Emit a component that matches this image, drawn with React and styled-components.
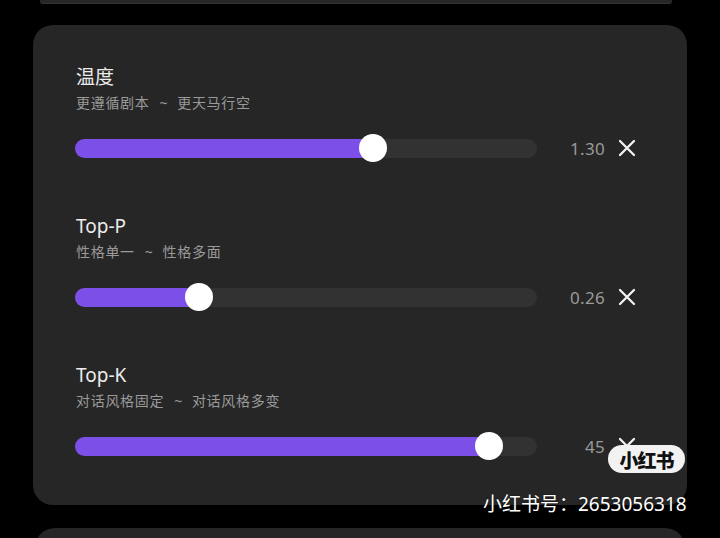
import styled, { createGlobalStyle } from "styled-components";

const GlobalStyle = createGlobalStyle`
  html, body {
    margin: 0;
    padding: 0;
    background: #000;
    overflow: hidden;
  }
  body {
    font-family: "Noto Sans", "Noto Sans CJK SC", sans-serif;
  }
`;

const Page = styled.div`
  position: relative;
  width: 720px;
  height: 538px;
  overflow: hidden;
  background: #000;
  display: flex;
  flex-direction: column;
  align-items: center;
`;

const PrevCard = styled.div`
  flex-shrink: 0;
  width: 632px;
  height: 3px;
  margin-left: -8px;
  background: #262626;
  border-radius: 0 0 14px 14px;
  box-shadow: 0 1px 0 #333;
`;

const Card = styled.div`
  flex-shrink: 0;
  width: 654px;
  height: 480px;
  box-sizing: border-box;
  margin-top: 22px;
  padding: 39px 51px 0 42px;
  background: #262626;
  border-radius: 20px;
  display: flex;
  flex-direction: column;
  gap: 50px;
`;

const NextCard = styled.div`
  flex-shrink: 0;
  width: 650px;
  height: 120px;
  margin-top: 23px;
  background: #262626;
  border-radius: 20px;
`;

const Section = styled.div`
  display: flex;
  flex-direction: column;
`;

const Title = styled.div`
  color: #ececec;
  font-size: 19px;
  line-height: 26px;
  padding-left: 1px;
`;

const Hint = styled.div`
  margin-top: 3px;
  color: #9a9a9a;
  font-size: 14px;
  line-height: 20px;
  letter-spacing: 0.7px;
  padding-left: 1px;
  white-space: nowrap;
`;

const Tilde = styled.span`
  margin: 0 9px 0 10px;
`;

const Row = styled.div`
  margin-top: 20px;
  height: 30px;
  display: flex;
  align-items: center;
`;

const Track = styled.div`
  position: relative;
  flex: 0 0 462px;
  height: 19px;
  border-radius: 10px;
  background: #323232;
`;

const Fill = styled.div`
  height: 100%;
  border-radius: 10px;
  background: #7b4fe8;
`;

const Thumb = styled.div`
  position: absolute;
  top: 50%;
  width: 28px;
  height: 28px;
  margin: -14px 0 0 -14px;
  border-radius: 50%;
  background: #fff;
`;

const Value = styled.div`
  flex: 1;
  text-align: right;
  color: #9a9a9a;
  font-size: 17px;
  letter-spacing: 0.3px;
`;

const Clear = styled.button`
  margin-left: 13px;
  width: 18px;
  height: 18px;
  padding: 0;
  border: none;
  background: none;
  display: flex;
  align-items: center;
  justify-content: center;
`;

const Badge = styled.div`
  position: absolute;
  left: 608px;
  top: 445px;
  width: 77px;
  height: 28px;
  border-radius: 14px;
  background: #f2f2f2;
  color: #111;
  font-family: "Noto Sans CJK SC", sans-serif;
  font-weight: 900;
  font-size: 19px;
  letter-spacing: -1px;
  display: flex;
  align-items: center;
  justify-content: center;
`;

const Watermark = styled.div`
  position: absolute;
  left: 483px;
  top: 491px;
  color: #fff;
  font-size: 19px;
  line-height: 26px;
  white-space: nowrap;
  text-shadow: 0 0 2px rgba(0, 0, 0, 0.4);
`;

const CloseIcon = () => (
  <svg width="18" height="18" viewBox="0 0 18 18">
    <path
      d="M2 2 L16 16 M16 2 L2 16"
      stroke="#f2f2f2"
      strokeWidth="2.3"
      strokeLinecap="round"
      fill="none"
    />
  </svg>
);

const params = [
  { title: "温度", from: "更遵循剧本", to: "更天马行空", pos: 0.645, label: "1.30" },
  { title: "Top-P", from: "性格单一", to: "性格多面", pos: 0.268, label: "0.26" },
  { title: "Top-K", from: "对话风格固定", to: "对话风格多变", pos: 0.896, label: "45" },
];

const Slider = ({ pos }) => {
  const pct = pos * 100;
  return (
    <Track>
      <Fill style={{ width: `${pct}%` }} />
      <Thumb style={{ left: `${pct}%` }} />
    </Track>
  );
};

const App = () => {
  return (
    <Page>
      <GlobalStyle />
      <PrevCard />
      <Card>
        {params.map((p) => (
          <Section key={p.title}>
            <Title>{p.title}</Title>
            <Hint>
              {p.from}
              <Tilde>~</Tilde>
              {p.to}
            </Hint>
            <Row>
              <Slider pos={p.pos} />
              <Value>{p.label}</Value>
              <Clear>
                <CloseIcon />
              </Clear>
            </Row>
          </Section>
        ))}
      </Card>
      <NextCard />
      <Badge>小红书</Badge>
      <Watermark>小红书号：2653056318</Watermark>
    </Page>
  );
};

export default App;
